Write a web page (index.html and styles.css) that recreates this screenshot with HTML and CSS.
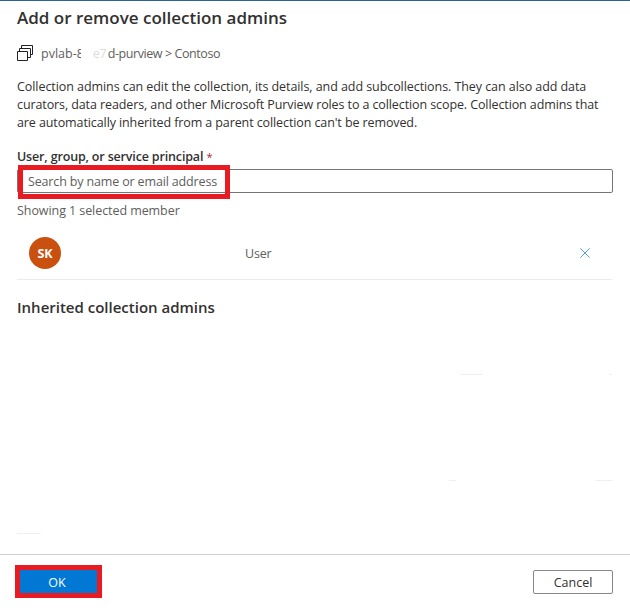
FILE: index.html
```html
<!DOCTYPE html>
<html lang="en">
<head>
<meta charset="utf-8">
<title>Add or remove collection admins</title>
<link rel="stylesheet" href="styles.css">
</head>
<body>
<div class="panel">
  <main class="content">
    <h1 class="title">Add or remove collection admins</h1>
    <div class="crumb">
      <svg class="crumb-icon" viewBox="0 0 16 16" width="16" height="16" fill="none" stroke="#222"><path d="M.5 6.500h10v9H.5zM2.500 6.500v-3h11v9h-3M4.500 3.500v-3h11v9h-2"/></svg>
      <span class="crumb-text"><span>pvlab-</span><span class="cut">8</span><span class="faded">e7</span><span class="crumb-end">d-purview &gt; Contoso</span></span>
    </div>
    <p class="description">
      <span class="line l1">Collection admins can edit the collection, its details, and add subcollections. They can also add data</span>
      <span class="line l2">curators, data readers, and other Microsoft Purview roles to a collection scope. Collection admins that</span>
      <span class="line l3">are automatically inherited from a parent collection can't be removed.</span>
    </p>
    <div class="label"><span class="label-text">User, group, or service principal</span> <span class="required">*</span></div>
    <div class="search"><span class="placeholder">Search by name or email address</span><div class="mark mark-search"></div></div>
    <div class="count"><span>Showing 1 selected member</span></div>
    <div class="member">
      <div class="avatar">SK</div>
      <span class="type">User</span>
      <svg class="remove" viewBox="0 0 10 10" width="10" height="10" stroke="#559fd8" fill="none"><path d="M.3.300 9.700 9.700M9.700.300.300 9.700"/></svg>
    </div>
    <h2 class="subtitle"><span>Inherited collection admins</span></h2>
    <div class="inherited">
      <div class="row row-a"><i class="w22"></i><i class="w3"></i></div>
      <div class="row row-b"><i class="w7"></i><i class="w16"></i></div>
      <div class="row row-c"><i class="w24"></i></div>
    </div>
  </main>
  <footer class="footer">
    <div class="ok">OK<div class="mark mark-ok"></div></div>
    <div class="cancel">Cancel</div>
  </footer>
</div>
</body>
</html>
```
FILE: styles.css
```css
* { box-sizing: border-box; }
body {
  margin: 0;
  background: #fff;
  color: #323130;
  font: 12.5px/18px "Open Sans", "Noto Sans", sans-serif;
}
.panel {
  width: 630px;
  height: 610px;
  display: flex;
  flex-direction: column;
  border-top: 1px solid #2b6596;
  overflow: hidden;
}
.content { flex: 1; padding: 0 17px; }
.title { margin: 6px 0 0; font-size: 17px; line-height: 22px; font-weight: 600; white-space: nowrap; }
.crumb { display: flex; align-items: flex-start; height: 18px; margin-top: 15px; color: #605e5c; }
.crumb-icon { width: 16px; height: 16px; margin: 1px 8px 0 0; }
.crumb-text { display: flex; line-height: 20px; white-space: pre; }
.cut { width: 4px; overflow: hidden; }
.faded { width: 27px; padding-left: 12px; opacity: .22; letter-spacing: -.3px; }
.crumb-end { letter-spacing: -.42px; }
.description { margin: 16px 0 0; }
.line { display: block; white-space: nowrap; }
.l1 { letter-spacing: -.067px; }
.l2, .l3 { letter-spacing: -.1px; }
.label { height: 18px; margin-top: 16px; font-weight: 600; white-space: nowrap; }
.label-text { letter-spacing: -.16px; }
.required { color: #a4262c; font-size: 11px; font-weight: 400; }
.search {
  position: relative;
  width: 596px;
  height: 24px;
  margin-top: 3px;
  padding-left: 10px;
  border: 1px solid #777573;
  border-radius: 2px;
  line-height: 23px;
  color: #605e5c;
}
.placeholder { letter-spacing: -.15px; }
.mark { position: absolute; border: 5px solid #e81b23; }
.mark-search { left: 0; top: -5px; width: 212px; height: 34px; }
.count { height: 18px; margin-top: 9px; color: #605e5c; letter-spacing: -.07px; }
.member {
  display: flex;
  align-items: center;
  width: 595px;
  height: 60px;
  padding: 7px 22px 0 12px;
  border-bottom: 1px solid #edebe9;
  color: #605e5c;
}
.avatar {
  width: 32px;
  height: 32px;
  margin-bottom: 1px;
  border-radius: 50%;
  background: #ca5010;
  color: #fff;
  font-size: 12.5px;
  font-weight: 700;
  line-height: 33px;
  text-align: center;
}
.type { margin-left: 184px; padding-top: 1px; letter-spacing: -.2px; }
.remove { margin: 0 0 1px auto; }
.subtitle { margin: 16px 0 0; font-size: 15px; line-height: 22px; font-weight: 600; white-space: nowrap; }
.inherited { padding-top: 56px; }
.row { display: flex; justify-content: space-between; height: 1px; }
.row i { height: 1px; background: #f0efee; }
.row-a { width: 152px; margin-left: 443px; }
.row-b { width: 163px; margin: 105px 0 0 432px; }
.row-c { margin-top: 52px; }
.w22 { width: 23px; }
.w3 { width: 3px; }
.w7 { width: 7px; }
.w16 { width: 16px; }
.w24 { width: 24px; }
.footer {
  display: flex;
  justify-content: space-between;
  height: 56px;
  padding: 15px 17px 0;
  border-top: 1px solid #d2d0ce;
}
.ok, .cancel { height: 24px; width: 80px; text-align: center; }
.ok { position: relative; background: #0078d4; color: #fff; line-height: 25px; }
.mark-ok { left: -2px; top: -5px; width: 87px; height: 33px; }
.cancel { border: 1px solid #8a8886; border-radius: 2px; line-height: 23px; }
```
